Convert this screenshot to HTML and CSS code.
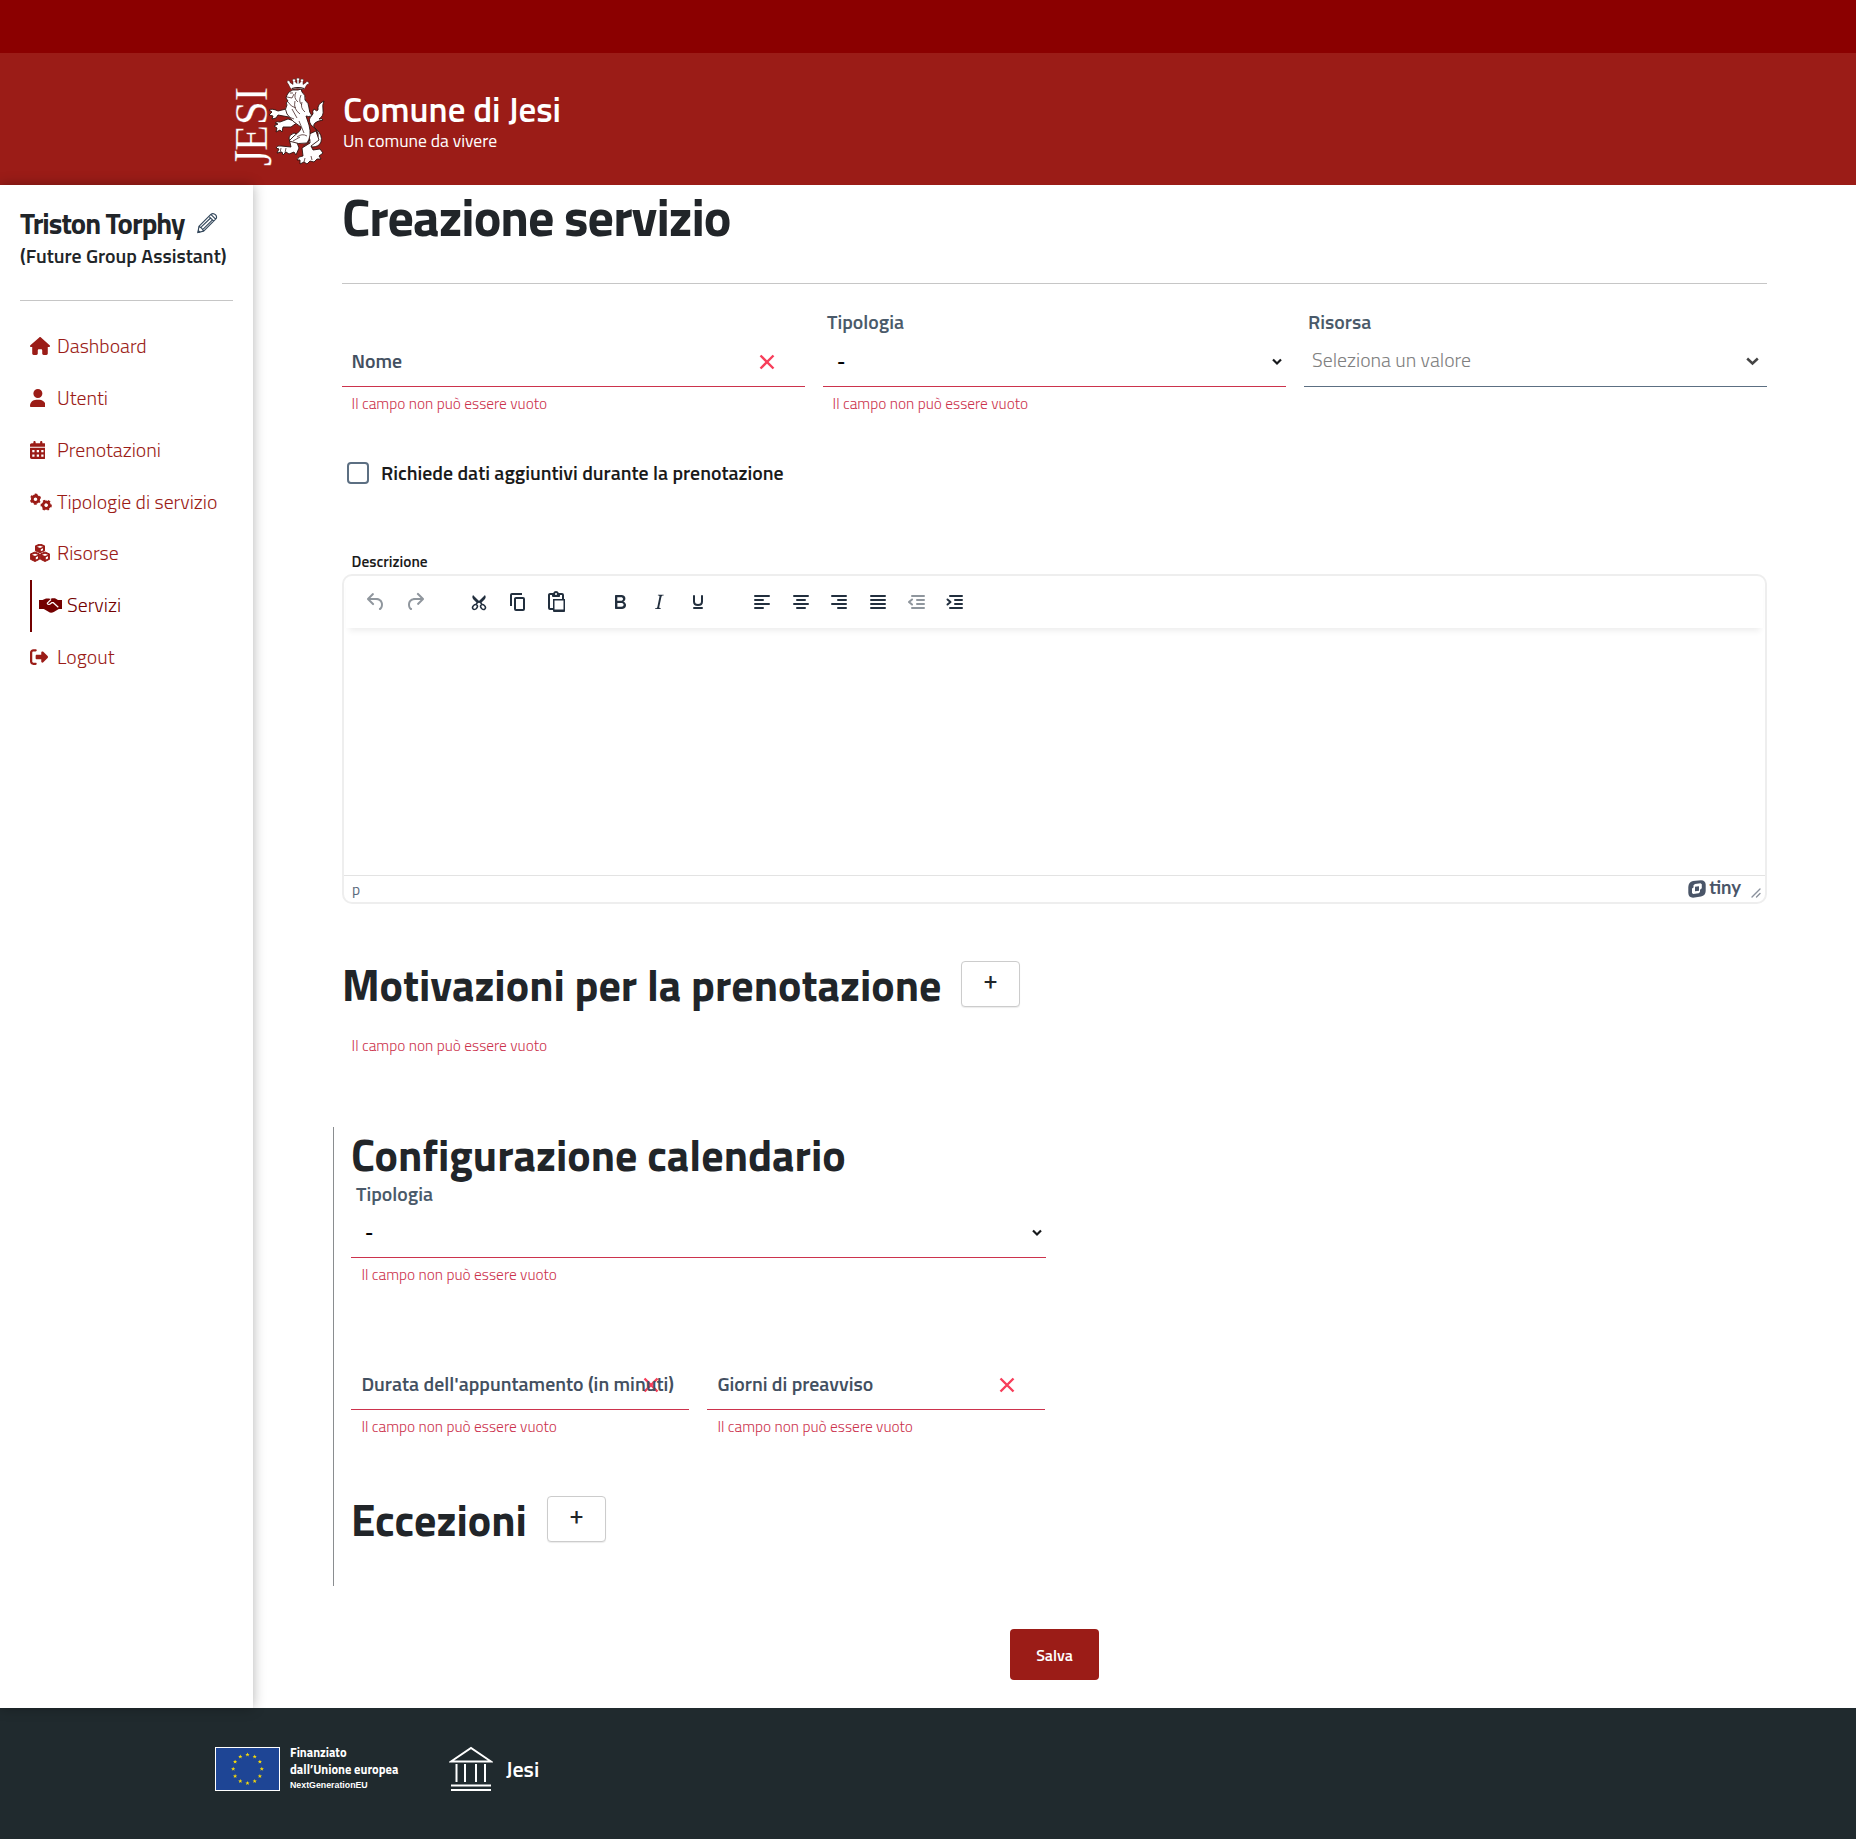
FILE: index.html
```html
<!DOCTYPE html>
<html lang="it">
<head>
<meta charset="utf-8">
<title>Creazione servizio</title>
<link rel="stylesheet" href="styles.css">
</head>
<body>
<div class="topbar"></div>
<header class="header">
  <svg class="logo" viewBox="0 0 92 92" width="92" height="92">
    <text class="logo-text" transform="translate(31.500 74) rotate(-90)" textLength="64" lengthAdjust="spacingAndGlyphs">ESI</text>
    <text class="logo-j" transform="translate(36 89) rotate(-90)" textLength="16" lengthAdjust="spacingAndGlyphs">J</text>
    <g fill="#fff" stroke="#2c1210" stroke-width=".9" stroke-linejoin="round">
      <path d="M73 64q3-1 6 0q5-1 4-8q-2-5-7-8q-4-6 2-11q-1-3 1-5q3 3 4 1q-1-6 6-9q-2 4-1 9q1 6-4 9q3-1 4 1q-6 1-8 3q-3 3 1 6q7 6 5 13q-2 5-9 5z"/>
      <path d="M53 42l-8 3q-3-1-5 1l3 1l-4 2l3 2l-1 4l4-2l2 2l1-5l8 0l7-5z"/>
      <path d="M51 32l-8 2q-6-3-9-1l3 2l-3 3l4 1l-1 3l4-1l2-3l11 2l6-4z"/>
      <path d="M59 56q-5 2-5 5l2 9l-10-1q-4-1-5 2l3 1l-2 4l5-1l1 3l3-3l3 2l5-2l2 3l3-7l-3-8l9-3z"/>
      <path d="M72 58q4 4 3 8l-8 5l1 8q-5 0-6 4l3 0l0 4l4-2l3 2l3-3l4 1l3-3l4 0l-2-3l4-3l-3-4l-7 1l-2-4l8-6l-3-9z"/>
      <path d="M52 28q-2-2 1-4l-2-3l1-3l2-3q3-3 9-2l3-1l1 3q4 3 3 8q4 3 4 8q0 4 3 8q-4 1-6 0l3 9q3 11-2 18q-8 2-18-2l5-5q8-6 7-9q-9-5-14-13q-3-5 0-9z"/>
      <path transform="translate(0 2.500)" d="M55 8l-2-4a1.500 1.500 0 1 1 2-1l3 2l0-3a1.500 1.500 0 1 1 2 0l2 2l0-3a1.500 1.500 0 1 1 2 0l0 3l2-2a1.500 1.500 0 1 1 2 0l0 3l3-2a1.500 1.500 0 1 1 1 2l-3 5q-7-2-12 0z" stroke-width=".5"/>
    </g>
    <g fill="none" stroke="#4a2b29" stroke-width=".8">
      <path d="M52 20l5 1l2-4M55 16h3M61 15q-3 6 2 10M66 18q-3 7 1 10M53 25q3 5 8 6M67 25q-2 6 3 10M60 24q-2 8 5 13M57 32l5 9M54 40l5 2M64 44l5 12M62 60q5-4 10-1M58 64l7-4M68 69l6-4M46 71l-1 5M51 71l-1 5M70 81l-1 4M76 79l1 4"/>
      <path d="M57 11.500q6-2 12 0" stroke="#2c1210" stroke-width="1.200"/>
    </g>
  </svg>
  <div>
    <div class="brand">Comune di Jesi</div>
    <div class="tagline">Un comune da vivere</div>
  </div>
</header>
<main class="layout">
  <aside class="sidebar">
    <div class="user"><span>Triston Torphy</span>
      <svg width="21" height="22" viewBox="0 0 22 23" fill="none" stroke="#33475b" stroke-width="1.200" stroke-linejoin="round"><path d="M2 15L14.500 2.500Q17 .5 19.500 3Q21.500 5.500 19.500 7.500L7 20L1 21.500ZM12.500 4.500l5 5M14.500 2.500l5 5M2 15q3 1 5 5M4.500 15.500L14 6.500M6.500 18L16 8.500"/><path d="M1 21.500l.5-2l1.500 1.500z" fill="#33475b"/></svg>
    </div>
    <div class="role">(Future Group Assistant)</div>
    <nav class="menu">
      <a class="item"><svg width="20" height="18" viewBox="0 0 576 512"><path d="M575.800 255.500c0 18-15 32.100-32 32.100h-32l.7 160.200c0 2.700-.2 5.400-.5 8.100V472c0 22.100-17.900 40-40 40H392c-22.100 0-40-17.900-40-40V384c0-17.700-14.300-32-32-32H256c-17.700 0-32 14.300-32 32v88c0 22.100-17.900 40-40 40H104c-22.100 0-40-17.900-40-40V287.600H32c-18 0-32-14-32-32.100c0-9 3-17 10-24L266.400 8c7-7 15-8 22-8s15 2 21 7L564.800 231.500c8 7 12 15 11 24z"/></svg><span>Dashboard</span></a>
      <a class="item"><svg width="15.750" height="18" viewBox="0 0 448 512"><path d="M224 256A128 128 0 1 0 224 0a128 128 0 1 0 0 256zm-45.700 48C79.800 304 0 383.800 0 482.300C0 498.700 13.300 512 29.700 512H418.300c16.400 0 29.700-13.300 29.700-29.700C448 383.800 368.200 304 269.700 304H178.300z"/></svg><span>Utenti</span></a>
      <a class="item"><svg width="15.750" height="18" viewBox="0 0 448 512"><path fill-rule="evenodd" d="M128 0c17.700 0 32 14.300 32 32V64H288V32c0-17.700 14.300-32 32-32s32 14.300 32 32V64h48c26.500 0 48 21.500 48 48v48H0V112C0 85.500 21.500 64 48 64H96V32c0-17.700 14.300-32 32-32zM0 192H448V464c0 26.500-21.500 48-48 48H48c-26.500 0-48-21.500-48-48zM64 256v64h64v-64zM192 256v64h64v-64zM320 256v64h64v-64zM64 384v64h64v-64zM192 384v64h64v-64zM320 384v64h64v-64z"/></svg><span>Prenotazioni</span></a>
      <a class="item"><svg width="22" height="18" viewBox="0 0 22 18" fill="none" stroke="#9b1c17"><g id="gear"><circle cx="5.500" cy="6.200" r="3.200" stroke-width="2.800" fill="none"/><circle cx="5.500" cy="6.200" r="4.600" stroke-width="2" fill="none" stroke-dasharray="2.400 2.417" stroke-dashoffset="1.200" transform="rotate(30 5.500 6.200)"/></g><use href="#gear" transform="rotate(30 16.200 12.200) translate(10.700 6)"/></svg><span>Tipologie di servizio</span></a>
      <a class="item"><svg width="20" height="18" viewBox="0 0 20 18"><path d="M10 0l4.500 1.800v5l-4.500 2l-4.500-2v-5zM5 8l4.600 2v5.200L5 17.500L.3 15.200V10zM15 8l4.700 2v5.200L15 17.500l-4.600-2.300V10z" stroke="#9b1c17" stroke-width="1" stroke-linejoin="round"/><path d="M7 2.700l3 1.200l3-1.200l-3-1zM10.800 5.200v2l2.200-1V4.200zM2 10.800l3 1.300l3-1.300l-3-1.100zM5.800 13.300v2.200L8 14.400v-2.100zM12 10.800l3 1.300l3-1.300l-3-1.100zM15.800 13.300v2.200l2.200-1.100v-2.100z" fill="#fff"/></svg><span>Risorse</span></a>
      <a class="item active"><svg width="23" height="18" viewBox="0 0 23 18"><path d="M0 4h3.500l3.500-1.500h3l1.500.5l1.500-.8h3l3 1.800H23v9h-3.200l-5 3q-2 1-4 .5l-6-3.500H0z"/><path d="M12 3.500L8.300 7.200q.2 1.700 2.500 1l2-1.500h1.500l5 4.500" fill="none" stroke="#fff" stroke-width="1.200"/></svg><span>Servizi</span></a>
      <a class="item"><svg width="18" height="18" viewBox="0 0 512 512"><path d="M377.900 105.900L500.700 228.700c7.200 7.200 11.300 17.100 11.300 27.300s-4.100 20.100-11.300 27.300L377.900 406.100c-6.400 6.400-15 9.900-24 9.900c-18.700 0-33.900-15.200-33.900-33.900l0-62.100-128 0c-17.700 0-32-14.300-32-32l0-64c0-17.700 14.300-32 32-32l128 0 0-62.100c0-18.700 15.200-33.900 33.900-33.900c9 0 17.600 3.600 24 9.900zM160 96L96 96c-17.700 0-32 14.300-32 32l0 256c0 17.700 14.300 32 32 32l64 0c17.700 0 32 14.300 32 32s-14.300 32-32 32l-64 0c-53 0-96-43-96-96L0 128C0 75 43 32 96 32l64 0c17.700 0 32 14.300 32 32s-14.300 32-32 32z"/></svg><span>Logout</span></a>
    </nav>
  </aside>
  <form class="content">
    <h1>Creazione servizio</h1>
    <div class="fields">
      <div class="field">
        <div class="label"></div>
        <div class="control invalid floating"><svg class="cross" width="16" height="16" viewBox="0 0 16 16"><path d="M1.500 1.500l13 13M14.500 1.500l-13 13"/></svg><span>Nome</span></div>
        <div class="error">Il campo non può essere vuoto</div>
      </div>
      <div class="field">
        <div class="label">Tipologia</div>
        <div class="control invalid select"><span>-</span><svg class="chev" width="10" height="8" viewBox="0 0 10 8"><path d="M1 1.500l4 4l4-4"/></svg></div>
        <div class="error">Il campo non può essere vuoto</div>
      </div>
      <div class="field">
        <div class="label">Risorsa</div>
        <div class="control placeholder"><span>Seleziona un valore</span><svg class="chev" width="13" height="9" viewBox="0 0 13 9"><path d="M1.200 1.500l5.300 5l5.300-5"/></svg></div>
      </div>
    </div>
    <label class="check"><span class="box"></span><span>Richiede dati aggiuntivi durante la prenotazione</span></label>
    <div class="caption">Descrizione</div>
    <div class="editor">
      <div class="toolbar">
        <div class="group off">
          <svg viewBox="0 0 24 24"><path d="M6.400 8H12c3.700 0 6.200 2 6.800 5.100.6 2.700-.4 5.600-2.300 6.800a1 1 0 0 1-1-1.800c1.100-.6 1.800-2.700 1.400-4.600-.5-2.100-2.100-3.500-4.900-3.500H6.400l3.300 3.300a1 1 0 1 1-1.400 1.400l-5-5a1 1 0 0 1 0-1.400l5-5a1 1 0 0 1 1.400 1.400z"/></svg>
          <svg viewBox="0 0 24 24"><path d="M17.600 10H12c-2.800 0-4.400 1.400-4.900 3.500-.4 2 .3 4 1.400 4.600a1 1 0 1 1-1 1.800c-2-1.200-2.900-4.100-2.300-6.800.6-3 3-5.100 6.800-5.100h5.600l-3.300-3.300a1 1 0 1 1 1.400-1.400l5 5a1 1 0 0 1 0 1.400l-5 5a1 1 0 0 1-1.400-1.400z"/></svg>
        </div>
        <div class="group">
          <svg viewBox="0 0 24 24"><path d="M6 5l6 6l6-6q1.500 2 0 4l-4.500 4.500l-1.500-1l-1.500 1L6 9q-1.500-2 0-4z"/><path class="ln thin" d="M9.500 13.500l2-2M14.500 13.500l-2-2"/><ellipse class="ln thin" cx="8" cy="17" rx="2.700" ry="2" transform="rotate(-45 8 17)"/><ellipse class="ln thin" cx="16" cy="17" rx="2.700" ry="2" transform="rotate(45 16 17)"/></svg>
          <svg viewBox="0 0 24 24"><path d="M16 3H6a2 2 0 0 0-2 2v11h2V5h10V3Zm1 4a2 2 0 0 1 2 2v10a2 2 0 0 1-2 2h-7a2 2 0 0 1-2-2V9c0-1.200.9-2 2-2h7Zm0 12V9h-7v10h7Z"/></svg>
          <svg viewBox="0 0 24 24"><path d="M18 9V5h-2v1c0 .6-.4 1-1 1H9a1 1 0 0 1-1-1V5H6v13h3V9h9ZM9 20H6a2 2 0 0 1-2-2V5c0-1.100.9-2 2-2h3.200A3 3 0 0 1 12 1a3 3 0 0 1 2.800 2H18a2 2 0 0 1 2 2v4h1v12c0 .6-.4 1-1 1H10a1 1 0 0 1-1-1v-1Zm1.500-9.500v9h9v-9h-9ZM12 3a1 1 0 0 0-1 1c0 .5.4 1 1 1s1-.5 1-1-.4-1-1-1Z"/></svg>
        </div>
        <div class="group">
          <svg viewBox="0 0 24 24"><path d="M7.800 19c-.3 0-.5 0-.6-.2l-.2-.5V5.700c0-.2 0-.4.2-.5l.6-.2h5c1.500 0 2.700.3 3.500 1 .7.6 1.100 1.400 1.100 2.500a3 3 0 0 1-.6 1.900c-.4.6-1 1-1.600 1.200.4.1.9.3 1.300.6s.8.7 1 1.200c.4.4.5 1 .5 1.600 0 1.300-.4 2.300-1.300 3-.8.7-2.100 1-3.800 1H7.800Zm5-8.300c.6 0 1.200-.1 1.600-.5.4-.3.6-.7.6-1.300 0-1.100-.8-1.700-2.300-1.700H9.300v3.500h3.400Zm.5 6c.7 0 1.300-.1 1.700-.4.4-.4.6-.9.6-1.500s-.2-1-.7-1.400c-.4-.3-1-.4-2-.4H9.400v3.800h4Z"/></svg>
          <svg viewBox="0 0 24 24"><path d="m16.700 4.700-.1.9h-.3c-.6 0-1 0-1.400.3-.3.3-.4.6-.5 1.100l-2.100 9.800v.6c0 .5.4.8 1.400.8h.2l-.2.8H8l.2-.8h.2c1.100 0 1.800-.5 2-1.500l2-9.800.1-.5c0-.6-.4-.8-1.400-.8h-.3l.2-.9h5.800Z"/></svg>
          <svg viewBox="0 0 24 24"><path class="ln" d="M8 6v5.500q0 3.500 4 3.500t4-3.500V6M8 18h8"/></svg>
        </div>
        <div class="group">
          <svg viewBox="0 0 24 24"><path class="ln" d="M5 6h14M5 10h8M5 14h14M5 18h8"/></svg>
          <svg viewBox="0 0 24 24"><path class="ln" d="M5 6h14M8 10h8M5 14h14M8 18h8"/></svg>
          <svg viewBox="0 0 24 24"><path class="ln" d="M5 6h14M11 10h8M5 14h14M11 18h8"/></svg>
          <svg viewBox="0 0 24 24"><path class="ln" d="M5 6h14M5 10h14M5 14h14M5 18h14"/></svg>
          <svg class="dim" viewBox="0 0 24 24"><path class="ln" d="M7 6h12M12 10h7M12 14h7M7 18h12M7 9.500l-3 2.500l3 2.500"/></svg>
          <svg viewBox="0 0 24 24"><path class="ln" d="M7 6h12M12 10h7M12 14h7M7 18h12M4.500 9.500l3 2.500l-3 2.500"/></svg>
        </div>
      </div>
      <div class="canvas"></div>
      <div class="status"><span>p</span><div class="tiny"><svg width="18" height="18" viewBox="0 0 18 18"><path fill="#4a5568" fill-rule="evenodd" d="M5 1L13 .3Q17.500.5 17.700 4.500V11Q17.500 15.500 13 16.500L5 17.700Q.5 17.500.3 13V7Q.5 2 5 1zM7 4L5.500 5.200V7.500L4 8.500V13l1.200 1l5.500-.7l1.300-1.300V9.800l1.800-1.500V4.200L12.500 3.300zM7 6.800L11 6.200l0 4.500L7 11.200z"/></svg><b>tiny</b><svg class="grip" width="10" height="10" viewBox="0 0 10 10"><path d="M1 9l8-8M5.500 9L9 5.500" stroke="#8b929d" stroke-width="1.400" fill="none" stroke-linecap="round"/></svg></div></div>
    </div>
    <div class="heading first"><h2>Motivazioni per la prenotazione</h2><button type="button" class="add">+</button></div>
    <div class="error solo">Il campo non può essere vuoto</div>
    <section class="calendar">
      <h2>Configurazione calendario</h2>
      <div class="label">Tipologia</div>
      <div class="control invalid select"><span>-</span><svg class="chev" width="10" height="8" viewBox="0 0 10 8"><path d="M1 1.500l4 4l4-4"/></svg></div>
      <div class="error">Il campo non può essere vuoto</div>
      <div class="pair">
        <div>
          <div class="control invalid floating"><svg class="cross" width="16" height="16" viewBox="0 0 16 16"><path d="M1.500 1.500l13 13M14.500 1.500l-13 13"/></svg><span>Durata dell'appuntamento (in minuti)</span></div>
          <div class="error">Il campo non può essere vuoto</div>
        </div>
        <div>
          <div class="control invalid floating"><svg class="cross" width="16" height="16" viewBox="0 0 16 16"><path d="M1.500 1.500l13 13M14.500 1.500l-13 13"/></svg><span>Giorni di preavviso</span></div>
          <div class="error">Il campo non può essere vuoto</div>
        </div>
      </div>
      <div class="heading"><h2>Eccezioni</h2><button type="button" class="add">+</button></div>
    </section>
    <button type="button" class="save">Salva</button>
  </form>
</main>
<footer class="footer">
  <svg width="65" height="44" viewBox="0 0 65 44"><rect x=".5" y=".5" width="64" height="43" fill="#1e4595" stroke="#fff"/><g fill="#f5d90a"><path id="star" d="M32.500 5.500l.6 1.400h1.500l-1.200 1l.5 1.500l-1.400-.9l-1.400.9l.5-1.500l-1.200-1h1.500z"/><use href="#star" transform="translate(7.200 2)"/><use href="#star" transform="translate(12.400 7.200)"/><use href="#star" transform="translate(14.300 14.300)"/><use href="#star" transform="translate(12.400 21.500)"/><use href="#star" transform="translate(7.200 26.600)"/><use href="#star" transform="translate(0 28.600)"/><use href="#star" transform="translate(-7.200 26.600)"/><use href="#star" transform="translate(-12.400 21.500)"/><use href="#star" transform="translate(-14.300 14.300)"/><use href="#star" transform="translate(-12.400 7.200)"/><use href="#star" transform="translate(-7.200 2)"/></g></svg>
  <div class="eu"><div>Finanziato</div><div>dall’Unione europea</div><small>NextGenerationEU</small></div>
  <svg class="hall" width="44" height="46" viewBox="0 0 44 46" fill="none" stroke="#fff" stroke-width="2"><path d="M2 15.500L22 2L42 15.500zM7.500 18v18M16 18v18M27 18v18M36 18v18M2 39.500h40M2 44h40"/></svg>
  <div class="town">Jesi</div>
</footer>
</body>
</html>
```
FILE: styles.css
```css
* { box-sizing: border-box; }
body { margin: 0; background: #fff; color: #212529; font-family: "Titillium Web", Roboto, sans-serif; font-size: 19.800px; }
h1, h2 { margin: 0; font-weight: 700; color: #212529; }
svg { flex: none; }
span { white-space: nowrap; }

.topbar { height: 53px; background: #8b0000; }
.header { height: 132px; background: #9b1c17; color: #fff; display: flex; padding: 24px 0 0 235px; gap: 16px; }
.logo { overflow: visible; }
.logo-text, .logo-j { font-family: "Liberation Serif", serif; font-size: 47px; fill: #fff; stroke: #9b1c17; stroke-width: .3px; }
.logo-j { font-size: 54px; }
.brand { margin-top: 13px; font-size: 35px; line-height: 38px; font-weight: 600; }
.tagline { font-size: 17.600px; line-height: 26px; }

.layout { display: grid; grid-template-columns: 253px 1fr; height: 1523px; }
.sidebar { padding: 20px 20px 0; box-shadow: 0 0 12px rgba(0, 0, 0, .3); }
.user { display: flex; align-items: center; gap: 13px; height: 36px; font-size: 28.800px; font-weight: 700; letter-spacing: -1px; }
.role { height: 60px; padding-top: 3px; line-height: 24px; font-weight: 600; border-bottom: 1px solid #c6c6c6; }
.menu { padding: 20.600px 0 0 9.600px; }
.item { display: grid; grid-template-columns: 27.400px 1fr; align-items: center; height: 51.700px; padding-bottom: 2px; font-weight: 300; color: #9b1c17; }
.item svg { fill: #9b1c17; }
.item.active { border-left: 2px solid #730000; padding-left: 7.400px; grid-template-columns: 28px 1fr; color: #730000; }
.active svg { fill: #730000; }

.content { padding: 2px 89px 0; display: flex; flex-direction: column; }
.content > * { flex-shrink: 0; }
h1 { font-size: 52px; letter-spacing: -1px; line-height: 60px; height: 97px; border-bottom: 1px solid #c6c6c6; }
.fields { display: grid; grid-template-columns: repeat(3, 1fr); gap: 18px; padding-top: 26px; }
.label { height: 25px; line-height: 24px; padding-left: 4px; font-weight: 600; color: #4a5a6a; }
.control { position: relative; height: 52px; display: flex; align-items: center; justify-content: space-between; border-bottom: 1px solid #5c6f82; line-height: 24px; padding-top: 2px; }
.control.invalid { border-color: #cc334d; }
.control span { position: relative; margin-top: -3px; }
.control.floating { padding-left: 9.600px; font-weight: 600; color: #435061; }
.control.floating span { margin-top: -1px; }
.select { padding-left: 14px; padding-right: 4px; font-weight: 600; color: #000; }
.control.select span { margin-top: -2px; }
.placeholder { padding-left: 8px; padding-right: 8px; font-weight: 300; color: #808080; }
.cross { position: absolute; right: 30.500px; fill: none; stroke: #f73e5a; stroke-width: 2.400; }
.chev { fill: none; stroke: #17191c; stroke-width: 2.200; }
.placeholder .chev { stroke: #444; stroke-width: 2.500; }
.error { margin-top: 7px; height: 20px; line-height: 20px; padding-left: 9.600px; font-size: 15.400px; font-weight: 300; color: #cc334d; }
.check { display: flex; align-items: center; gap: 12px; margin-top: 47px; padding-left: 5px; height: 23px; font-weight: 600; color: #1a1a1a; }
.box { width: 22px; height: 22px; border: 2px solid #5c6f82; border-radius: 4px; }
.caption { margin-top: 68px; padding-left: 9.600px; line-height: 20px; font-size: 15.400px; font-weight: 600; color: #1a1a1a; }

.editor { margin-top: 2px; height: 330px; border: 2px solid #eee; border-radius: 10px; display: flex; flex-direction: column; }
.toolbar { flex: none; height: 52px; margin: 0 2px; padding-left: 10.700px; display: flex; align-items: center; gap: 25.500px; box-shadow: 0 6px 6px -3px rgba(0, 0, 0, .07); }
.group { display: flex; }
.group svg { width: 24px; height: 24px; margin: 0 7.350px; fill: #222f3e; }
.group .ln { fill: none; stroke: #222f3e; stroke-width: 2; stroke-linecap: round; stroke-linejoin: round; }
.group .thin { stroke-width: 1.500; }
.off svg, .group .dim { opacity: .5; }
.canvas { flex: 1; }
.status { flex: none; height: 27px; border-top: 1px solid #e3e3e3; display: flex; justify-content: space-between; align-items: center; padding: 0 4px 1px 8px; font-size: 15.500px; color: #5b6b7d; }
.tiny { display: flex; align-items: center; color: #4a5568; }
.tiny b { font: 700 18.500px/18px Lato, sans-serif; margin: -3px 10px 0 3px; }
.grip { margin-top: 9px; }

.heading { display: flex; align-items: flex-start; gap: 20px; }
.first { margin-top: 57px; }
h2 { font-size: 44px; line-height: 47px; height: 50px; }
.add { width: 59.500px; height: 46px; border: 1px solid #ccc; border-radius: 4px; background: #fff; padding: 0 0 4px; font: 400 24px/24px Roboto, sans-serif; color: #212529; box-shadow: 0 1px 1px rgba(0, 0, 0, .08); }
.first .add { margin-left: -.600px; }
.solo { margin-top: 25px; }
.calendar { margin: 71px 0 0 -9px; height: 459px; width: 713px; border-left: 1px solid #8a8d90; padding: 4px 0 0 17px; }
.calendar .label { line-height: 26px; padding-left: 5px; }
.calendar .error { padding-left: 10.400px; }
.calendar .control.floating { padding-left: 10.400px; }
.pair { display: grid; grid-template-columns: 338px 338px; gap: 18px; margin-top: 73px; }
.calendar .heading { margin-top: 59px; }
.save { margin: 43px auto 0; width: 89px; height: 51px; border: 0; border-radius: 4px; background: #9b1c17; color: #fff; font: 600 16px/20px "Titillium Web", Roboto, sans-serif; }

.footer { height: 131px; margin-bottom: 2px; background: #202a2e; color: #fff; display: flex; padding: 39px 0 0 215px; }
.eu { margin: -3.500px 51px 0 10px; width: 108px; font: 700 12.500px/17px "Titillium Web", "Open Sans", sans-serif; white-space: nowrap; }
.eu div { height: 17px; }
.eu small { display: block; font: 700 8.800px/15px "Liberation Sans", sans-serif; }
.hall { margin-top: -1px; }
.town { margin: 9px 0 0 13px; font-size: 22px; line-height: 26px; font-weight: 600; }
```
